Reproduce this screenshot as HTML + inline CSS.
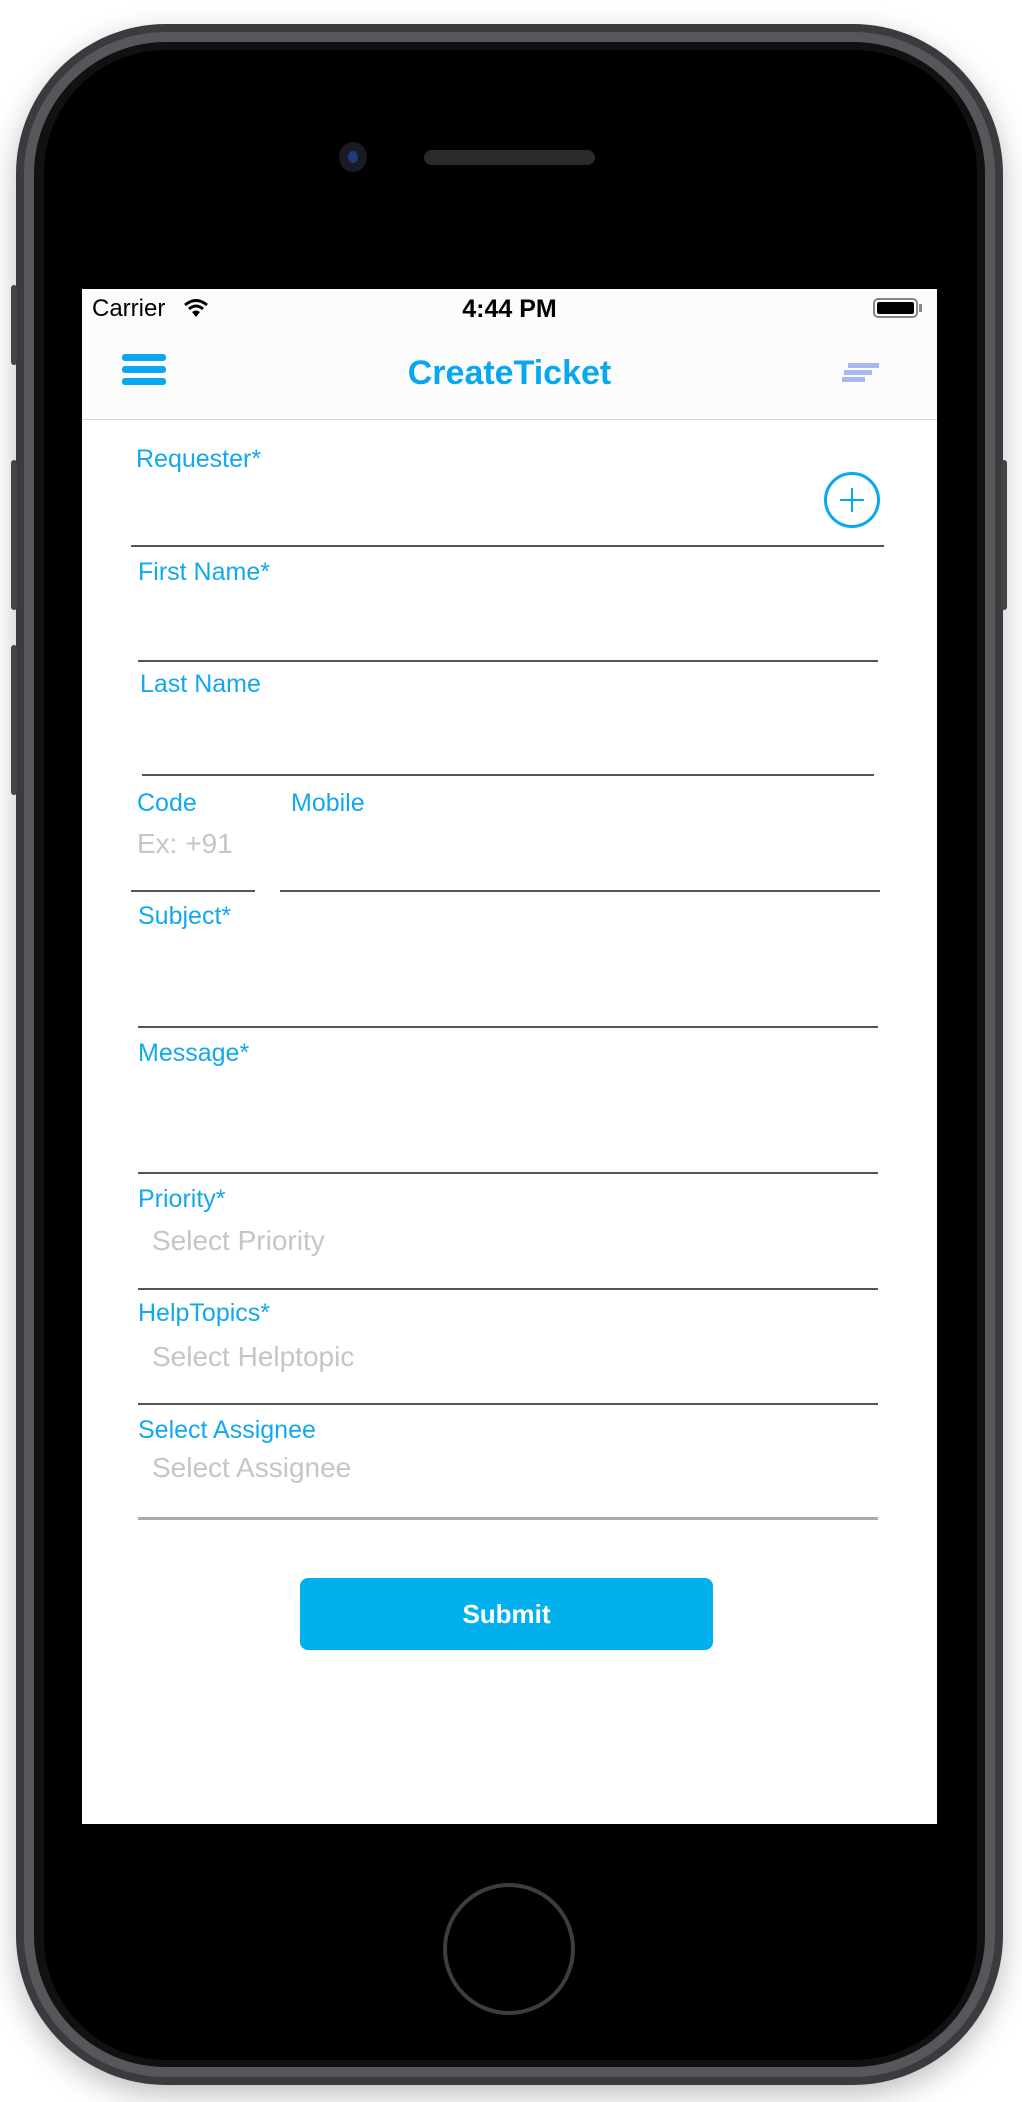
<!DOCTYPE html>
<html><head><meta charset="utf-8"><style>
*{margin:0;padding:0;box-sizing:border-box}
body{width:1022px;height:2102px;background:#fff;position:relative;overflow:hidden;font-family:"Liberation Sans",sans-serif}
.abs{position:absolute}
.lbl{position:absolute;font-size:25px;line-height:25px;color:#12a8ee;white-space:nowrap}
.ph{position:absolute;font-size:28px;line-height:28px;color:#c5c5ca;white-space:nowrap}
.ln{position:absolute;height:2px;background:#555}
</style></head><body>
<div class="abs" style="left:16px;top:24px;width:987px;height:2061px;border-radius:150px;background:#3a3b3e;box-shadow:0 10px 30px rgba(0,0,0,.25)"></div>
<div class="abs" style="left:24px;top:32px;width:971px;height:2045px;border-radius:142px;background:#55575b"></div>
<div class="abs" style="left:34px;top:42px;width:951px;height:2025px;border-radius:132px;background:#111"></div>
<div class="abs" style="left:44px;top:50px;width:933px;height:2010px;border-radius:122px;background:#000"></div>
<div class="abs" style="left:11px;top:285px;width:6px;height:80px;background:#444;border-radius:3px"></div>
<div class="abs" style="left:11px;top:460px;width:6px;height:150px;background:#444;border-radius:3px"></div>
<div class="abs" style="left:11px;top:645px;width:6px;height:150px;background:#444;border-radius:3px"></div>
<div class="abs" style="left:1001px;top:460px;width:6px;height:150px;background:#444;border-radius:3px"></div>
<div class="abs" style="left:339px;top:142px;width:28px;height:30px;border-radius:50%;background:#1a1a22"></div>
<div class="abs" style="left:348px;top:151px;width:10px;height:12px;border-radius:50%;background:#1f3a80"></div>
<div class="abs" style="left:424px;top:150px;width:171px;height:15px;border-radius:8px;background:#2a2a2c"></div>
<div class="abs" style="left:443px;top:1883px;width:132px;height:132px;border-radius:50%;border:4px solid #3c3d44;background:#000"></div>
<!-- screen -->
<div class="abs" style="left:82px;top:289px;width:855px;height:1535px;background:#fff;overflow:hidden">
 <div class="abs" style="left:0;top:0;width:855px;height:131px;background:#fcfcfc;border-bottom:1px solid #d6d6d6"></div>
 <div class="abs" style="left:10px;top:5px;font-size:24px;line-height:30px;color:#000">Carrier</div>
 <svg class="abs" style="left:101px;top:8px" width="26" height="22" viewBox="0 0 26 22"><path d="M2 8 Q13 -1 24 8" stroke="#000" stroke-width="3" fill="none"/><path d="M6 12 Q13 6 20 12" stroke="#000" stroke-width="3" fill="none"/><path d="M9 15 L13 20 L17 15 Q13 12 9 15Z" fill="#000"/></svg>
 <div class="abs" style="left:0;top:5px;width:855px;text-align:center;font-size:25px;line-height:30px;color:#000;font-weight:bold">4:44 PM</div>
 <div class="abs" style="left:791px;top:9px;width:45px;height:20px;border:2px solid #888;border-radius:5px;padding:2px"><div style="width:100%;height:100%;background:#000;border-radius:2px"></div></div>
 <div class="abs" style="left:837px;top:15px;width:3px;height:8px;background:#888"></div>
 <div class="abs" style="left:40px;top:65px;width:44px;height:7px;border-radius:3px;background:#08a8ef"></div>
 <div class="abs" style="left:40px;top:77px;width:44px;height:7px;border-radius:3px;background:#08a8ef"></div>
 <div class="abs" style="left:40px;top:89px;width:44px;height:7px;border-radius:3px;background:#08a8ef"></div>
 <div class="abs" style="left:0;top:64px;width:855px;text-align:center;font-size:34px;line-height:40px;font-weight:bold;color:#08a8ef">CreateTicket</div>
 <div class="abs" style="left:766px;top:74px;width:31px;height:5px;background:#aab7f0"></div>
 <div class="abs" style="left:762px;top:81px;width:28px;height:5px;background:#aab7f0"></div>
 <div class="abs" style="left:760px;top:88px;width:23px;height:5px;background:#aab7f0"></div>
</div>
<!-- form (page coords) -->
<div class="lbl" style="left:136px;top:447px">Requester*</div>
<div class="abs" style="left:824px;top:472px;width:56px;height:56px;border-radius:50%;border:3px solid #08a8ef"></div>
<div class="abs" style="left:840px;top:499px;width:24px;height:2px;background:#08a8ef"></div>
<div class="abs" style="left:851px;top:488px;width:2px;height:24px;background:#08a8ef"></div>
<div class="ln" style="left:131px;top:545px;width:753px"></div>
<div class="lbl" style="left:138px;top:560px">First Name*</div>
<div class="ln" style="left:138px;top:660px;width:740px"></div>
<div class="lbl" style="left:140px;top:672px">Last Name</div>
<div class="ln" style="left:142px;top:774px;width:732px"></div>
<div class="lbl" style="left:137px;top:791px">Code</div>
<div class="lbl" style="left:291px;top:791px">Mobile</div>
<div class="ph" style="left:137px;top:830px">Ex: +91</div>
<div class="ln" style="left:131px;top:890px;width:124px"></div>
<div class="ln" style="left:280px;top:890px;width:600px"></div>
<div class="lbl" style="left:138px;top:904px">Subject*</div>
<div class="ln" style="left:138px;top:1026px;width:740px"></div>
<div class="lbl" style="left:138px;top:1041px">Message*</div>
<div class="ln" style="left:138px;top:1172px;width:740px"></div>
<div class="lbl" style="left:138px;top:1187px">Priority*</div>
<div class="ph" style="left:152px;top:1227px">Select Priority</div>
<div class="ln" style="left:138px;top:1288px;width:740px"></div>
<div class="lbl" style="left:138px;top:1301px">HelpTopics*</div>
<div class="ph" style="left:152px;top:1343px">Select Helptopic</div>
<div class="ln" style="left:138px;top:1403px;width:740px"></div>
<div class="lbl" style="left:138px;top:1418px">Select Assignee</div>
<div class="ph" style="left:152px;top:1454px">Select Assignee</div>
<div class="ln" style="left:138px;top:1517px;width:740px;height:3px;background:#aaa"></div>
<div class="abs" style="left:300px;top:1578px;width:413px;height:72px;border-radius:8px;background:#03b0ee;color:#fff;font-weight:bold;font-size:26px;line-height:72px;text-align:center">Submit</div>
</body></html>
